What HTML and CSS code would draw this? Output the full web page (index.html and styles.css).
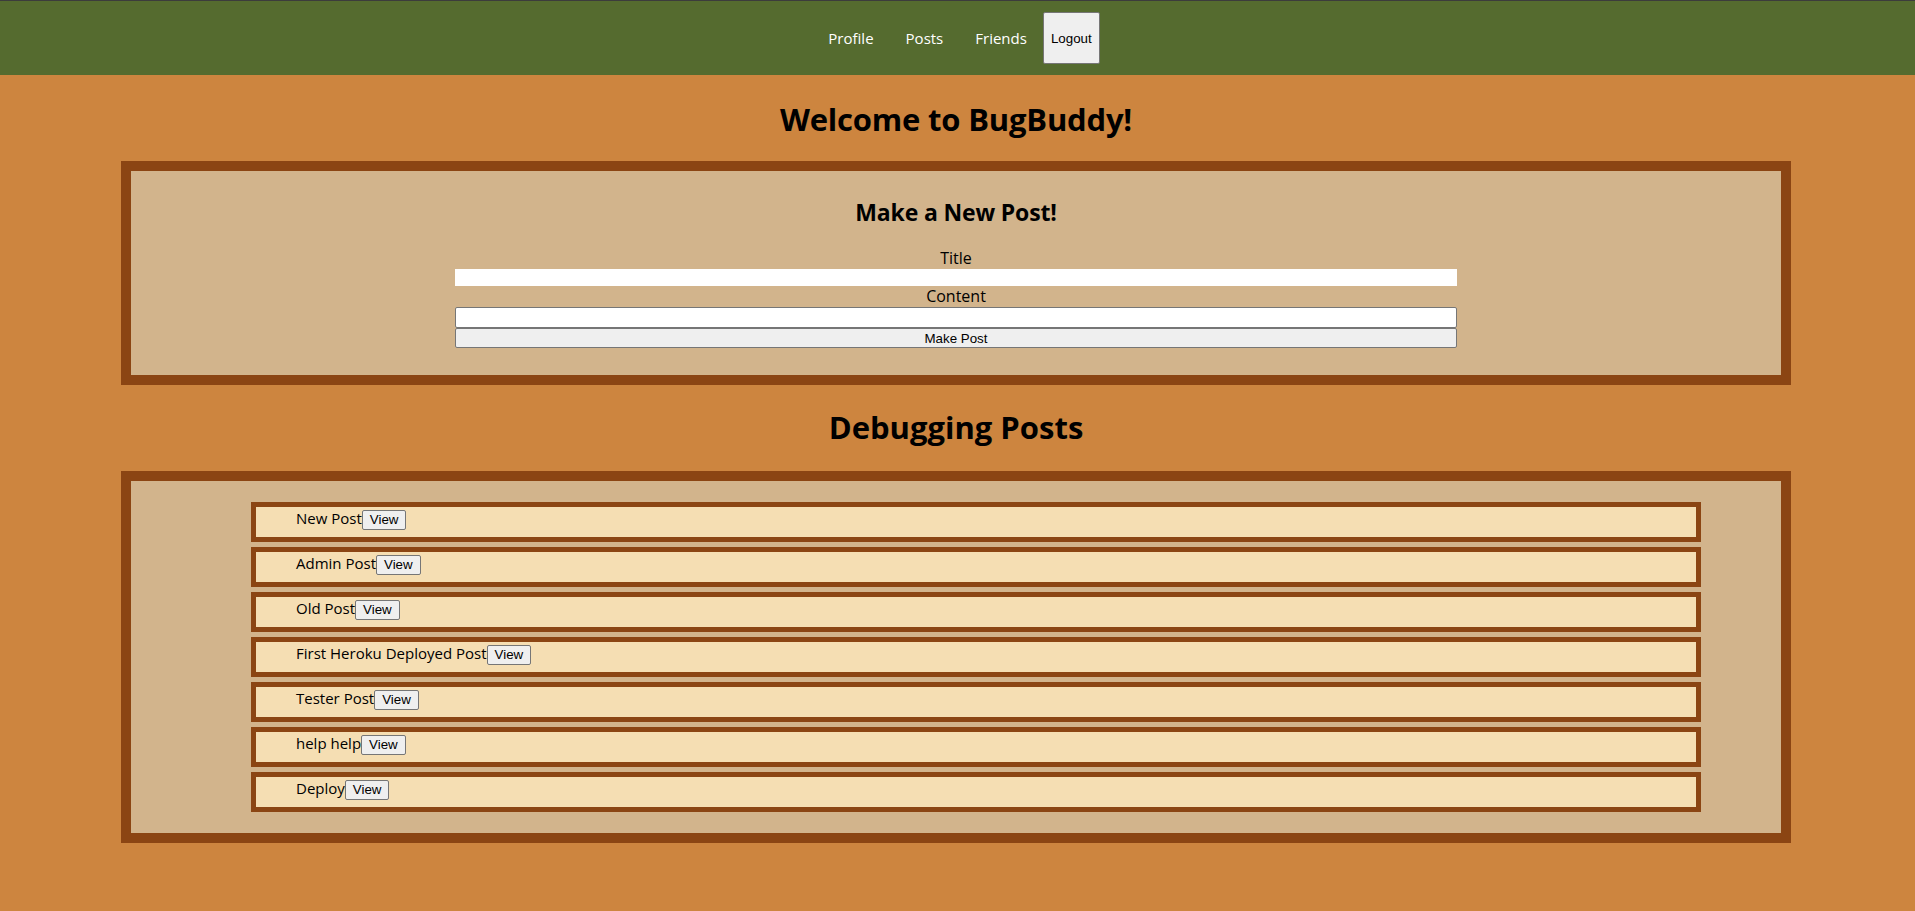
FILE: index.html
```html
<!DOCTYPE html>
<html lang="en">
<head>
<meta charset="utf-8">
<title>BugBuddy</title>
<link rel="stylesheet" href="styles.css">
</head>
<body>
<nav class="topnav">
  <a class="nav-link" href="#">Profile</a>
  <a class="nav-link" href="#">Posts</a>
  <a class="nav-link" href="#">Friends</a>
  <button class="logout-btn" type="button">Logout</button>
</nav>
<main class="page">
  <h1 class="page-title">Welcome to BugBuddy!</h1>
  <section class="panel panel-form">
    <h2 class="form-title">Make a New Post!</h2>
    <form class="post-form">
      <label class="field-label" for="title">Title</label>
      <input id="title" class="title-input" type="text">
      <label class="field-label" for="content">Content</label>
      <input id="content" class="content-input" type="text">
      <button class="submit-btn" type="button">Make Post</button>
    </form>
  </section>
  <h1 class="section-title">Debugging Posts</h1>
  <section class="panel panel-posts">
    <ul class="post-list">
      <li class="post-item"><span class="post-name">New Post</span><button class="view-btn" type="button">View</button></li>
      <li class="post-item"><span class="post-name">Admin Post</span><button class="view-btn" type="button">View</button></li>
      <li class="post-item"><span class="post-name">Old Post</span><button class="view-btn" type="button">View</button></li>
      <li class="post-item"><span class="post-name">First Heroku Deployed Post</span><button class="view-btn" type="button">View</button></li>
      <li class="post-item"><span class="post-name">Tester Post</span><button class="view-btn" type="button">View</button></li>
      <li class="post-item"><span class="post-name">help help</span><button class="view-btn" type="button">View</button></li>
      <li class="post-item"><span class="post-name">Deploy</span><button class="view-btn" type="button">View</button></li>
    </ul>
  </section>
</main>
</body>
</html>
```

FILE: styles.css
```css
html, body {
  margin: 0;
  padding: 0;
}

body {
  background: #cd853f;
  color: #000;
  font-family: "Open Sans", "Noto Sans", sans-serif;
  min-height: 911px;
}

.topnav {
  display: flex;
  justify-content: center;
  align-items: center;
  height: 74px;
  padding-right: 3px;
  border-top: 1px solid #3c3c3c;
  background: #556b2f;
}

.nav-link {
  color: #fff;
  text-decoration: none;
  font-size: 15px;
  line-height: 20px;
  padding: 0 16px;
}

.logout-btn {
  height: 52px;
  padding: 0 7px;
  font-family: "Liberation Sans", Arial, sans-serif;
  font-size: 13.33px;
  color: #000;
  background: #efefef;
  border: 1px solid #767676;
  border-radius: 2px;
}

.page {
  padding-right: 3px;
}

.page-title {
  margin: 24px 0 21px;
  font-size: 31px;
  line-height: 41px;
  letter-spacing: -0.2px;
  font-weight: 700;
  text-align: center;
}

.section-title {
  margin: 22px 0 23px;
  font-size: 31px;
  line-height: 41px;
  font-weight: 700;
  text-align: center;
}

.panel {
  box-sizing: border-box;
  width: 1670px;
  margin: 0 auto;
  border: 10px solid #8b4513;
  background: #d2b48c;
}

.panel-form {
  height: 224px;
  padding-top: 26px;
}

.form-title {
  margin: 0 0 20px;
  font-size: 23px;
  line-height: 31px;
  letter-spacing: -0.15px;
  font-weight: 700;
  text-align: center;
}

.post-form {
  display: flex;
  flex-direction: column;
  width: 1002px;
  margin: 0 auto;
}

.field-label {
  font-size: 16px;
  line-height: 21px;
  text-align: center;
}

.title-input {
  box-sizing: border-box;
  height: 17px;
  padding: 1px 2px;
  border: none;
  background: #fff;
}

.content-input {
  box-sizing: border-box;
  height: 21px;
  padding: 1px 2px;
  border: 1px solid #767676;
  border-radius: 2px;
  background: #fff;
}

.submit-btn {
  box-sizing: border-box;
  height: 20px;
  padding: 0 6px;
  font-family: "Liberation Sans", Arial, sans-serif;
  font-size: 13.33px;
  color: #000;
  background: #efefef;
  border: 1px solid #767676;
  border-radius: 2px;
}

.panel-posts {
  padding: 21px 0;
}

.post-list {
  margin: 0;
  padding: 0;
  list-style: none;
}

.post-item {
  box-sizing: border-box;
  height: 40px;
  margin: 0 80px 5px 120px;
  padding: 1px 0 0 40px;
  border: 5px solid #8b4513;
  background: #f5deb3;
  font-size: 15px;
  line-height: 21px;
}

.post-item:last-child {
  margin-bottom: 0;
}

.view-btn {
  box-sizing: border-box;
  height: 20px;
  padding: 0 7px;
  vertical-align: baseline;
  font-family: "Liberation Sans", Arial, sans-serif;
  font-size: 13.33px;
  color: #000;
  background: #efefef;
  border: 1px solid #767676;
  border-radius: 2px;
}
```
